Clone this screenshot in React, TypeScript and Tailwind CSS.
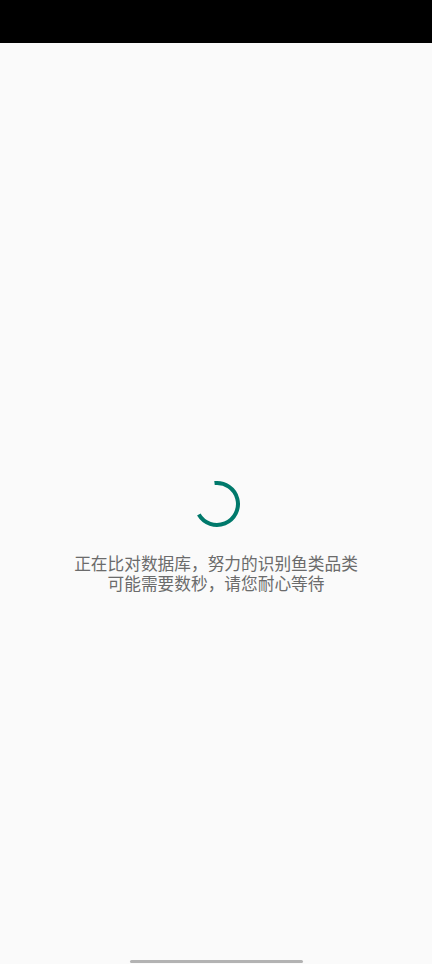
export default function App() {
  return (
    <div className="flex h-[964px] w-[432px] flex-col overflow-hidden bg-[#fafafa]" style={{ fontFamily: '"Noto Sans CJK SC", "Noto Sans", sans-serif' }}>
      <div className="h-[43px] shrink-0 bg-black" />
      <div className="flex flex-1 flex-col items-center pt-[437px]">
        <svg width="48" height="48" viewBox="0 0 48 48" className="shrink-0">
          <path
            d="M 21.5 3.1 A 21 21 0 1 1 5.8 34.5"
            fill="none"
            stroke="#00796b"
            strokeWidth="4"
            strokeLinecap="butt"
            transform="translate(1 0)"
          />
        </svg>
        <p className="mt-[25px] text-center text-[16.7px] leading-[20px] text-[#6b6b6b]">
          正在比对数据库，努力的识别鱼类品类
          <br />
          可能需要数秒，请您耐心等待
        </p>
      </div>
      <div className="flex shrink-0 justify-center pb-[1px]">
        <div className="h-[3px] w-[173px] rounded-full bg-[#b3b3b3]" />
      </div>
    </div>
  );
}
